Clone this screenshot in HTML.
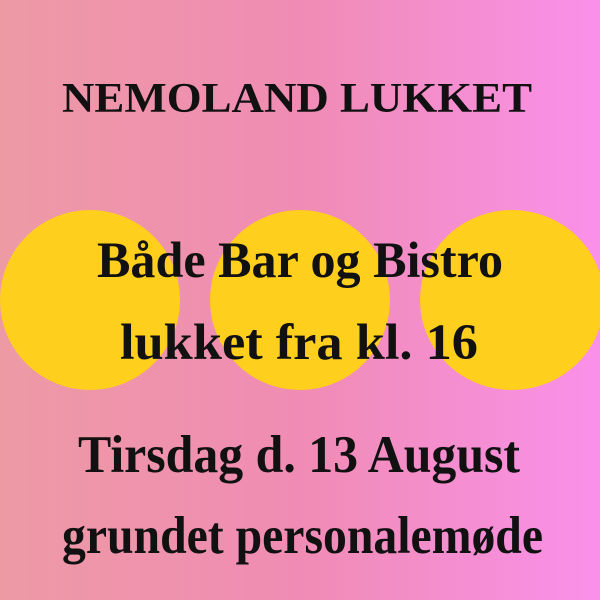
<!DOCTYPE html>
<html><head><meta charset="utf-8"><style>
html,body{margin:0;padding:0;width:600px;height:600px;overflow:hidden}
body{background:linear-gradient(90deg,#ee9aa5 0%,#f08cb4 50%,#fa90ea 100%)}
</style></head><body>
<svg width="600" height="600" xmlns="http://www.w3.org/2000/svg" style="position:absolute;left:0;top:0">
<g fill="#fecf1c">
<ellipse cx="90" cy="300" rx="90" ry="90"/>
<ellipse cx="300" cy="300" rx="90" ry="90"/>
<ellipse cx="512" cy="300" rx="92" ry="90"/>
</g>
<g font-family="Liberation Serif, serif" fill="#111" font-weight="bold">
<text x="62" y="112" font-size="42" textLength="470" lengthAdjust="spacingAndGlyphs">NEMOLAND LUKKET</text>
<text x="97" y="277" font-size="51" textLength="406" lengthAdjust="spacingAndGlyphs">Både Bar og Bistro</text>
<text x="120" y="359" font-size="51" textLength="358" lengthAdjust="spacingAndGlyphs">lukket fra kl. 16</text>
<text x="78" y="472" font-size="53" textLength="442" lengthAdjust="spacingAndGlyphs">Tirsdag d. 13 August</text>
<text x="62" y="553" font-size="53" textLength="481" lengthAdjust="spacingAndGlyphs">grundet personalemøde</text>
</g>
</svg>
</body></html>
